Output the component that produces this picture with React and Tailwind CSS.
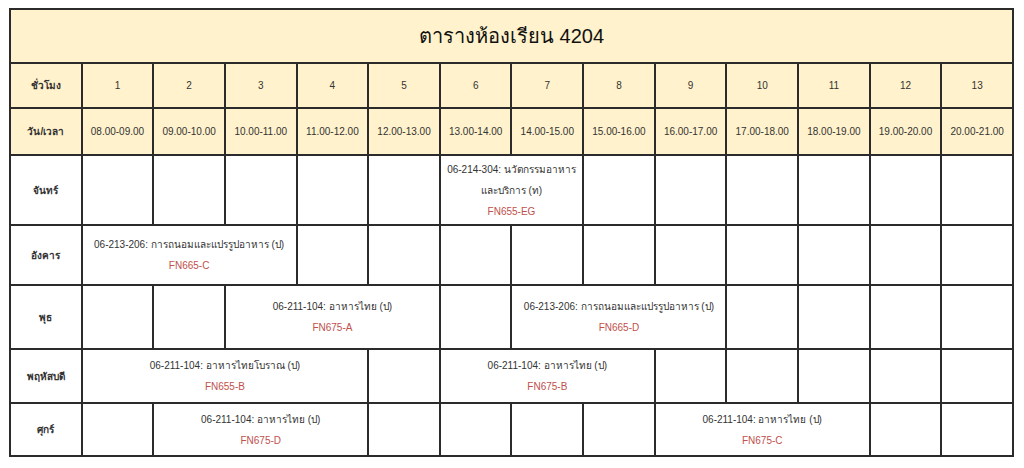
const periods = [
  ['1', '08.00-09.00'],
  ['2', '09.00-10.00'],
  ['3', '10.00-11.00'],
  ['4', '11.00-12.00'],
  ['5', '12.00-13.00'],
  ['6', '13.00-14.00'],
  ['7', '14.00-15.00'],
  ['8', '15.00-16.00'],
  ['9', '16.00-17.00'],
  ['10', '17.00-18.00'],
  ['11', '18.00-19.00'],
  ['12', '19.00-20.00'],
  ['13', '20.00-21.00'],
]

// each day: list of cells, { span, lines, room } or null for an empty hour
const days = [
  {
    name: 'จันทร์',
    height: 'h-[70px]',
    cells: [
      null, null, null, null, null,
      { span: 2, lines: ['06-214-304: นวัตกรรมอาหาร', 'และบริการ (ท)'], room: 'FN655-EG' },
      null, null, null, null, null, null,
    ],
  },
  {
    name: 'อังคาร',
    height: 'h-[60px]',
    cells: [
      { span: 3, lines: ['06-213-206: การถนอมและแปรรูปอาหาร (ป)'], room: 'FN665-C' },
      null, null, null, null, null, null, null, null, null, null,
    ],
  },
  {
    name: 'พุธ',
    height: 'h-[64px]',
    cells: [
      null, null,
      { span: 3, lines: ['06-211-104: อาหารไทย (ป)'], room: 'FN675-A' },
      null,
      { span: 3, lines: ['06-213-206: การถนอมและแปรรูปอาหาร (ป)'], room: 'FN665-D' },
      null, null, null, null,
    ],
  },
  {
    name: 'พฤหัสบดี',
    height: 'h-[54px]',
    cells: [
      { span: 4, lines: ['06-211-104: อาหารไทยโบราณ (ป)'], room: 'FN655-B' },
      null,
      { span: 3, lines: ['06-211-104: อาหารไทย (ป)'], room: 'FN675-B' },
      null, null, null, null, null,
    ],
  },
  {
    name: 'ศุกร์',
    height: 'h-[53px]',
    cells: [
      null,
      { span: 3, lines: ['06-211-104: อาหารไทย (ป)'], room: 'FN675-D' },
      null, null, null, null,
      { span: 3, lines: ['06-211-104: อาหารไทย (ป)'], room: 'FN675-C' },
      null, null,
    ],
  },
]

const cell = 'border-2 border-[#2b2b2b] text-center align-middle'

export default function App() {
  return (
    <div className="min-h-[468px] w-[1024px] bg-white pl-[9px] pt-[8px] font-['Liberation_Sans','Noto_Sans',sans-serif] text-[10px] leading-[21px] text-[#333]">
      <table className="w-[1005px] table-fixed border-collapse">
        <colgroup>
          {Array.from({ length: 14 }).map((_, i) => (
            <col key={i} />
          ))}
        </colgroup>
        <thead className="bg-[#fff2cc]">
          <tr>
            <th colSpan={14} className={`${cell} h-[54px] text-[20px] font-normal text-[#111]`}>
              ตารางห้องเรียน 4204
            </th>
          </tr>
          <tr>
            <th className={`${cell} h-[45px] font-bold`}>ชั่วโมง</th>
            {periods.map(([n]) => (
              <td key={n} className={cell}>{n}</td>
            ))}
          </tr>
          <tr>
            <th className={`${cell} h-[47px] font-bold`}>วัน/เวลา</th>
            {periods.map(([n, time]) => (
              <td key={n} className={cell}>{time}</td>
            ))}
          </tr>
        </thead>
        <tbody>
          {days.map((day) => (
            <tr key={day.name}>
              <th className={`${cell} ${day.height} font-bold`}>{day.name}</th>
              {day.cells.map((c, i) =>
                c ? (
                  <td key={i} colSpan={c.span} className={cell}>
                    {c.lines.map((line) => (
                      <div key={line}>{line}</div>
                    ))}
                    <div className="text-[#c0504d]">{c.room}</div>
                  </td>
                ) : (
                  <td key={i} className={cell} />
                )
              )}
            </tr>
          ))}
        </tbody>
      </table>
    </div>
  )
}
